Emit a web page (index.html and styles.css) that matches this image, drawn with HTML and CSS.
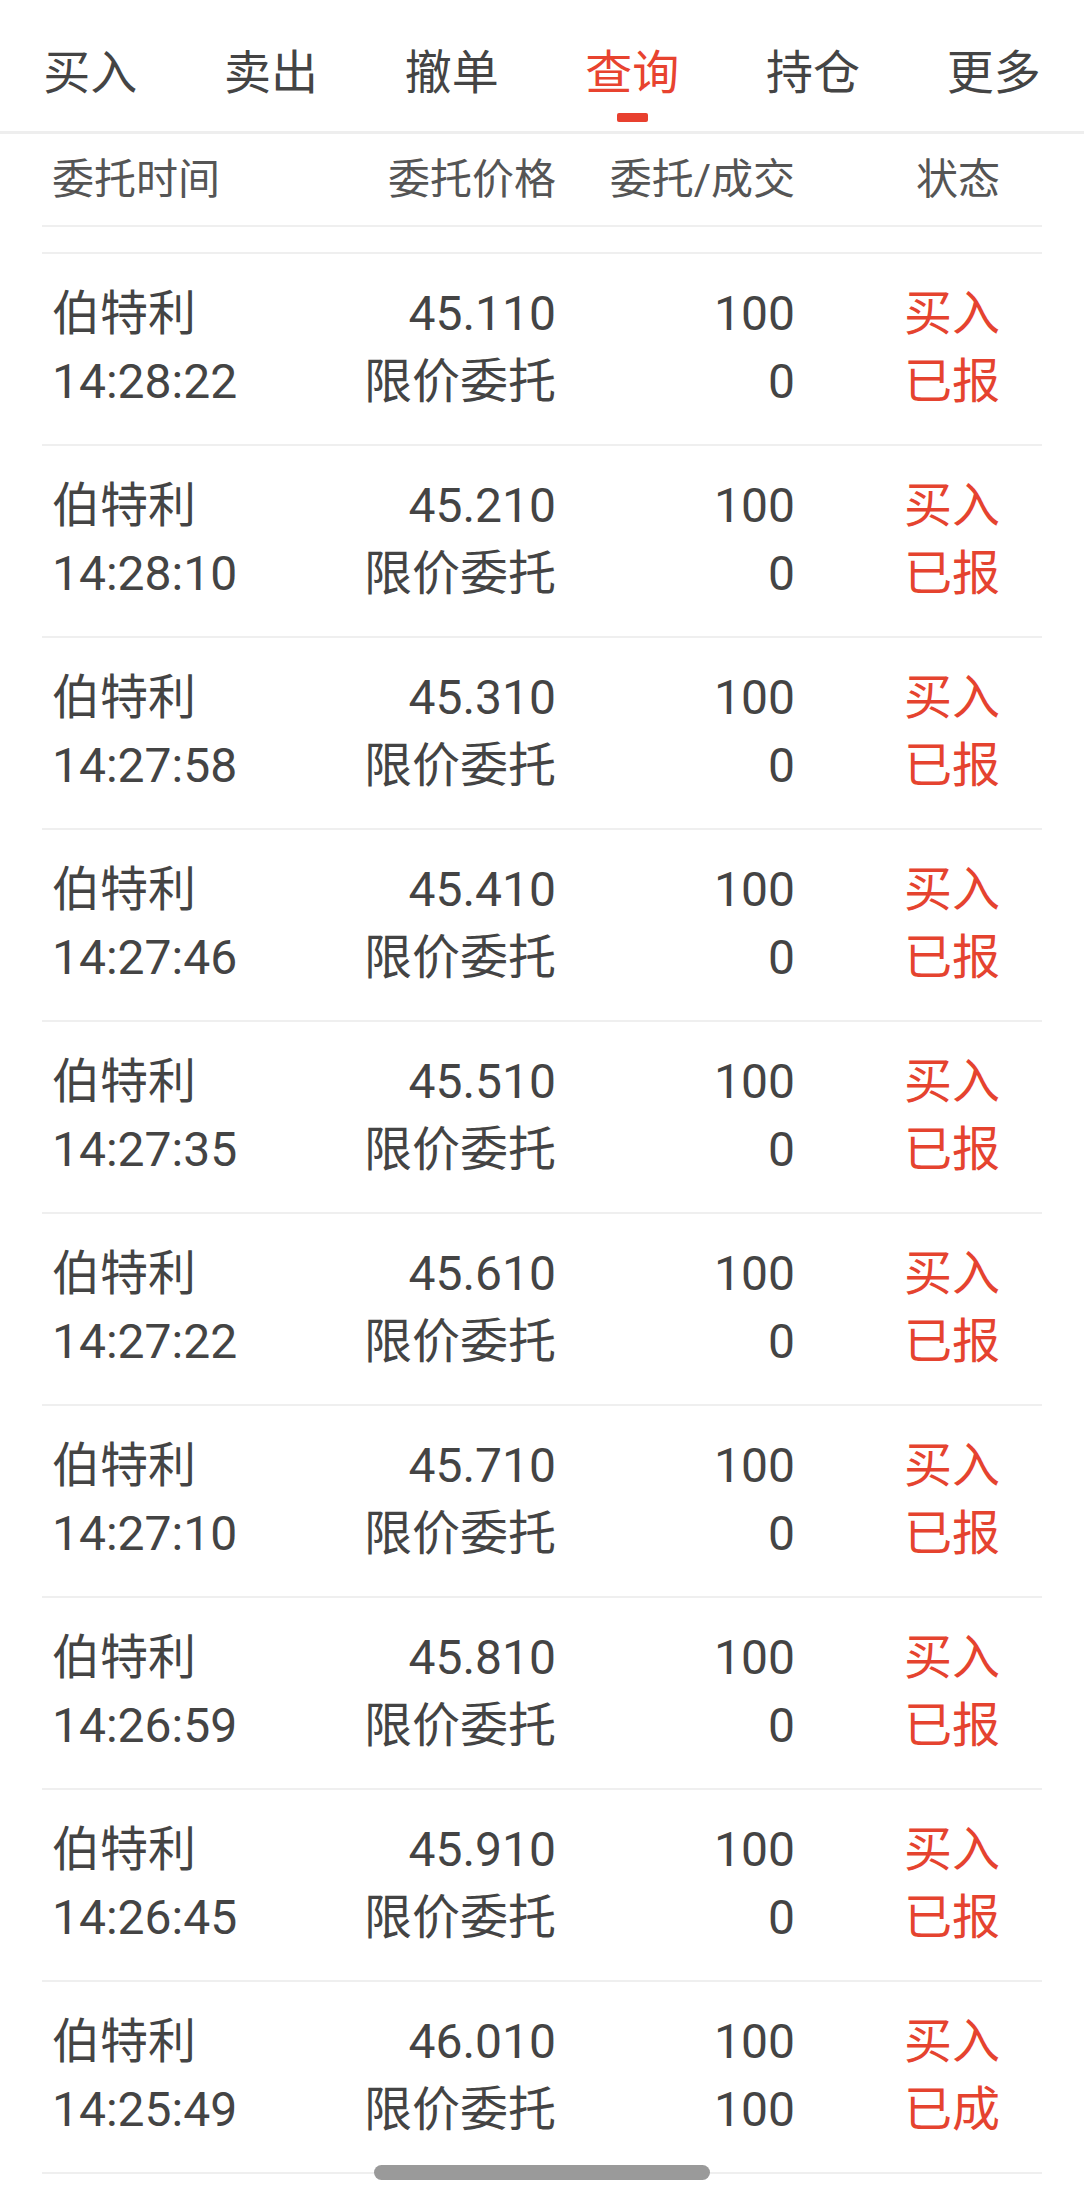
FILE: index.html
```html
<!DOCTYPE html>
<html lang="zh-CN">
<head>
    <meta charset="UTF-8">
    <meta name="viewport" content="width=device-width, initial-scale=1.0">
    <title>查询</title>
    <link rel="stylesheet" href="styles.css">
</head>
<body>

    <!-- Top Tabs -->
    <div class="tabs">
        <div class="tab">买入</div>
        <div class="tab">卖出</div>
        <div class="tab">撤单</div>
        <div class="tab active">查询</div>
        <div class="tab">持仓</div>
        <div class="tab">更多</div>
    </div>

    <div class="table">
        <div class="head">
            <div class="cell name">委托时间</div>
            <div class="cell">委托价格</div>
            <div class="cell">委托/成交</div>
            <div class="cell">状态</div>
        </div>
        <div class="spacer"></div>

        <div class="row">
            <div class="cell name"><span>伯特利</span><span>14:28:22</span></div>
            <div class="cell"><span>45.110</span><span>限价委托</span></div>
            <div class="cell"><span>100</span><span>0</span></div>
            <div class="cell status"><span>买入</span><span>已报</span></div>
        </div>
        <div class="row">
            <div class="cell name"><span>伯特利</span><span>14:28:10</span></div>
            <div class="cell"><span>45.210</span><span>限价委托</span></div>
            <div class="cell"><span>100</span><span>0</span></div>
            <div class="cell status"><span>买入</span><span>已报</span></div>
        </div>
        <div class="row">
            <div class="cell name"><span>伯特利</span><span>14:27:58</span></div>
            <div class="cell"><span>45.310</span><span>限价委托</span></div>
            <div class="cell"><span>100</span><span>0</span></div>
            <div class="cell status"><span>买入</span><span>已报</span></div>
        </div>
        <div class="row">
            <div class="cell name"><span>伯特利</span><span>14:27:46</span></div>
            <div class="cell"><span>45.410</span><span>限价委托</span></div>
            <div class="cell"><span>100</span><span>0</span></div>
            <div class="cell status"><span>买入</span><span>已报</span></div>
        </div>
        <div class="row">
            <div class="cell name"><span>伯特利</span><span>14:27:35</span></div>
            <div class="cell"><span>45.510</span><span>限价委托</span></div>
            <div class="cell"><span>100</span><span>0</span></div>
            <div class="cell status"><span>买入</span><span>已报</span></div>
        </div>
        <div class="row">
            <div class="cell name"><span>伯特利</span><span>14:27:22</span></div>
            <div class="cell"><span>45.610</span><span>限价委托</span></div>
            <div class="cell"><span>100</span><span>0</span></div>
            <div class="cell status"><span>买入</span><span>已报</span></div>
        </div>
        <div class="row">
            <div class="cell name"><span>伯特利</span><span>14:27:10</span></div>
            <div class="cell"><span>45.710</span><span>限价委托</span></div>
            <div class="cell"><span>100</span><span>0</span></div>
            <div class="cell status"><span>买入</span><span>已报</span></div>
        </div>
        <div class="row">
            <div class="cell name"><span>伯特利</span><span>14:26:59</span></div>
            <div class="cell"><span>45.810</span><span>限价委托</span></div>
            <div class="cell"><span>100</span><span>0</span></div>
            <div class="cell status"><span>买入</span><span>已报</span></div>
        </div>
        <div class="row">
            <div class="cell name"><span>伯特利</span><span>14:26:45</span></div>
            <div class="cell"><span>45.910</span><span>限价委托</span></div>
            <div class="cell"><span>100</span><span>0</span></div>
            <div class="cell status"><span>买入</span><span>已报</span></div>
        </div>
        <div class="row">
            <div class="cell name"><span>伯特利</span><span>14:25:49</span></div>
            <div class="cell"><span>46.010</span><span>限价委托</span></div>
            <div class="cell"><span>100</span><span>100</span></div>
            <div class="cell status"><span>买入</span><span>已成</span></div>
        </div>
    </div>

    <!-- Horizontal scroll thumb -->
    <div class="scroll-thumb"></div>

</body>
</html>
```

FILE: styles.css
```css
/* General Styles */
body {
    margin: 0;
    background: #fff;
    color: #444;
    font-family: Roboto, "Noto Sans CJK SC", sans-serif;
}

/* Tabs */
.tabs {
    display: flex;
    height: 131px;
    border-bottom: 3px solid #eeeeee;
}

.tab {
    flex: 1;
    display: flex;
    flex-direction: column;
    align-items: center;
    padding-top: 45px;
    font-size: 47px;
    line-height: 56px;
    color: #444;
}

.tab.active {
    color: #e8432f;
}

.tab.active::after {
    content: "";
    width: 31px;
    height: 9px;
    margin-top: 12px;
    border-radius: 2px;
    background: #e8402f;
}

/* Table */
.table {
    margin: 0 42px;
}

.head,
.row {
    display: grid;
    grid-template-columns: 303px 201px 239px 205px;
    padding: 0 42px 0 10px;
    border-bottom: 2px solid #efefef;
}

.head {
    height: 83px;
    padding-bottom: 8px;
    align-items: center;
    font-size: 42px;
    color: #555;
}

.spacer {
    height: 25px;
    border-bottom: 2px solid #efefef;
}

.row {
    height: 164px;
    padding-top: 26px;
    font-size: 48px;
    line-height: 68px;
}

.cell {
    display: flex;
    flex-direction: column;
    align-items: flex-end;
}

.cell.name {
    align-items: flex-start;
}

.cell.status {
    color: #e5432f;
}

/* Scroll thumb */
.scroll-thumb {
    position: absolute;
    left: 374px;
    top: 2165px;
    width: 336px;
    height: 15px;
    border-radius: 8px;
    background: #9a9a9a;
}
```
